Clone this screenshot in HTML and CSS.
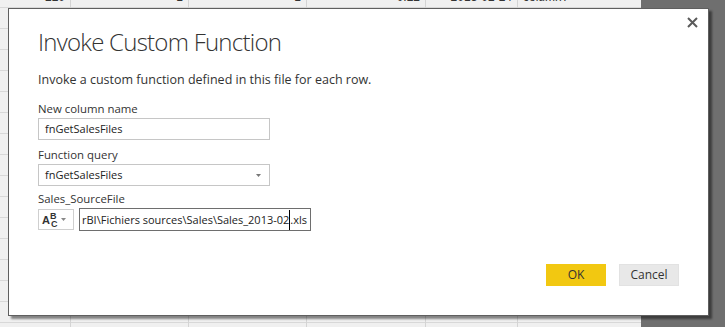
FILE: index.html
```html
<!DOCTYPE html>
<html>
<head>
<meta charset="utf-8">
<link rel="stylesheet" href="styles.css">
</head>
<body>
<div class="screen">
  <div class="sheet">
    <div class="col c1"><div class="cell r">220</div></div>
    <div class="col c2"><div class="cell r">1</div></div>
    <div class="col c3"><div class="cell r">1</div></div>
    <div class="col c4"><div class="cell r">0.22</div></div>
    <div class="col c5"><div class="cell r">2013-02-24</div></div>
    <div class="col c6"><div class="cell l">column?</div></div>
    <div class="shade"></div>
  </div>

  <div class="dialog">
    <button class="close" aria-label="Close">
      <svg width="11" height="11" viewBox="0 0 11 11"><path d="M1 1 L10 10 M10 1 L1 10" stroke="#5a5a5a" stroke-width="2" fill="none"/></svg>
    </button>
    <h1 class="title">Invoke Custom Function</h1>
    <p class="desc">Invoke a custom function defined in this file for each row.</p>

    <div class="field f1">
      <label class="label">New column name</label>
      <div class="input">fnGetSalesFiles</div>
    </div>
    <div class="field f2">
      <label class="label">Function query</label>
      <div class="input select">fnGetSalesFiles
        <svg class="caret" width="5" height="3" viewBox="0 0 5 3"><path d="M0 0 H5 L2.5 3 Z" fill="#777"/></svg>
      </div>
    </div>
    <div class="field f3">
      <label class="label">Sales_SourceFile</label>
      <div class="param">
        <div class="type">
          <span class="abc"><span class="a">A</span><span class="bc"><span class="b">B</span><span class="c">C</span></span></span>
          <svg class="caret2" width="5" height="3" viewBox="0 0 5 3"><path d="M0 0 H5 L2.5 3 Z" fill="#888"/></svg>
        </div>
        <div class="input text focus"><span class="val">rBI\Fichiers sources\Sales\Sales_2013-02<span class="cursor"></span>.xls</span></div>
      </div>
    </div>

    <div class="footer">
      <button class="btn ok">OK</button>
      <button class="btn cancel">Cancel</button>
    </div>
  </div>
</div>
</body>
</html>
```

FILE: styles.css
```css
* { box-sizing: border-box; }
html, body { margin: 0; padding: 0; }
body {
  width: 725px;
  height: 327px;
  overflow: hidden;
  font-family: "Open Sans", "Noto Sans", sans-serif;
  color: #333;
}
.screen {
  position: relative;
  width: 725px;
  height: 327px;
}
.sheet {
  display: flex;
  height: 327px;
}
.col {
  height: 100%;
  background-color: #f0f0f0;
  background-image: repeating-linear-gradient(to bottom, transparent 0, transparent 7px, #d8d8d8 7px, #d8d8d8 8px, transparent 8px, transparent 21px);
  border-right: 1px solid #d4d4d4;
  overflow: hidden;
}
.c1 { width: 71px; }
.c2 { width: 118px; }
.c3 { width: 118px; }
.c4 { width: 119px; }
.c5 { width: 92px; }
.c6 { width: 123px; border-right: none; }
.shade { flex: 1; background: #6f6f6f; }
.cell {
  font-family: "Liberation Sans", sans-serif;
  font-size: 12px;
  line-height: 12px;
  margin-top: -9px;
  height: 16px;
  color: #333;
  padding: 0 5px;
}
.cell.r { text-align: right; }
.cell.l { text-align: left; }

.dialog {
  position: absolute;
  left: 8px;
  top: 8px;
  width: 701px;
  height: 308px;
  background: #fff;
  border: 1px solid #5f5f5f;
  box-shadow: 3px 3px 2px rgba(0,0,0,0.45);
  padding: 0 29px 29px 29px;
  display: flex;
  flex-direction: column;
  align-items: flex-start;
}
.close {
  position: absolute;
  right: 10px;
  top: 8px;
  width: 11px;
  height: 11px;
  padding: 0;
  border: none;
  background: none;
  display: flex;
}
.title {
  margin: 18px 0 0 0;
  font-weight: 300;
  font-size: 24px;
  line-height: 30px;
  color: #333;
  letter-spacing: -0.75px;
}
.desc {
  margin: 14px 0 0 0;
  font-size: 12.5px;
  line-height: 18px;
  color: #333;
}
.field {
  display: flex;
  flex-direction: column;
}
.f1 { margin-top: 11px; }
.f2 { margin-top: 6px; }
.f3 { margin-top: 4px; }
.label {
  font-size: 11.4px;
  line-height: 17px;
  color: #333;
  margin-bottom: 1px;
}
.input {
  width: 232px;
  height: 22px;
  border: 1px solid #c6c6c6;
  font-size: 11px;
  line-height: 20px;
  padding: 0 6px;
  color: #222;
  position: relative;
  display: flex;
  align-items: center;
}
.select { justify-content: space-between; padding-right: 8px; }
.param {
  display: flex;
  align-items: center;
  gap: 5px;
}
.type {
  width: 36px;
  height: 21px;
  border: 1px solid #cfcfcf;
  display: flex;
  align-items: center;
  padding: 0 0 0 3px;
  gap: 4px;
}
.abc {
  display: inline-flex;
  align-items: flex-start;
  color: #333;
  height: 19px;
  font-family: "Liberation Sans", sans-serif;
  font-weight: bold;
}
.abc .a { margin-top: 5px; font-size: 11px; line-height: 11px; }
.abc .bc { display: flex; flex-direction: column; margin-left: 0; }
.abc .b { font-size: 9px; line-height: 8px; margin-top: 2px; }
.abc .c { font-size: 9px; line-height: 8px; margin-left: 1px; }
.text {
  width: 232px;
  height: 23px;
  border-color: #6e6e6e;
  padding: 0 0 0 2px;
  overflow: hidden;
  white-space: nowrap;
}
.val { display: inline-flex; align-items: center; }
.cursor {
  display: inline-block;
  width: 1px;
  height: 20px;
  background: #000;
}
.footer {
  margin-top: auto;
  align-self: flex-end;
  display: flex;
  gap: 13px;
}
.btn {
  width: 60px;
  height: 22px;
  font-family: "Open Sans", "Noto Sans", sans-serif;
  font-size: 12px;
  line-height: 20px;
  color: #333;
  padding: 0;
  border: 1px solid transparent;
}
.ok { background: #f2c811; border-color: #f2c811; }
.cancel { background: #e8e8e8; border-color: #e2e2e2; }
```
